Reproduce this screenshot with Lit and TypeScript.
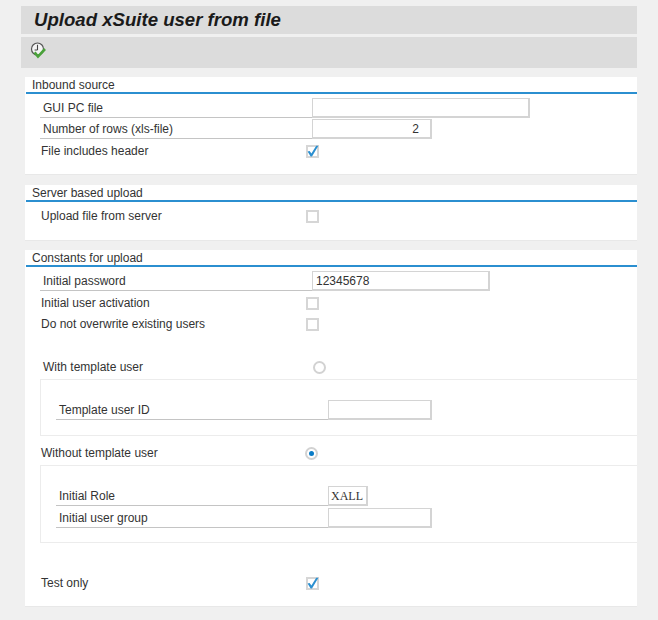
import { LitElement, html, css } from 'lit';
import { customElement } from 'lit/decorators.js';

const checkMark = html`<svg viewBox="0 0 13 14" width="13" height="14">
  <path d="M1.6 6.6 L3.6 6 L5.4 8.6 L10.2 0.8 L12.4 0.8 L6 11.6 L4.6 11.6 Z" fill="#2b8fd0" />
</svg>`;

@customElement('app-root')
export class AppRoot extends LitElement {
  static override styles = css`
    :host {
      display: block;
      width: 658px;
      height: 620px;
      overflow: hidden;
      background: #f0f0f0;
      font-family: 'Liberation Sans', sans-serif;
      font-size: 12px;
      color: #333;
      box-sizing: border-box;
      padding-top: 6px;
    }

    .title {
      margin: 0 21px;
      height: 28px;
      background: #dcdcdc;
      padding-left: 13px;
      font: italic bold 18.6px/27px 'Liberation Sans', sans-serif;
      color: #1a1a1a;
    }

    .toolbar {
      margin: 3px 21px 0;
      height: 31px;
      background: #dcdcdc;
      padding: 5px 0 0 9px;
      box-sizing: border-box;
    }

    .panel {
      margin: 9px 21px 0 25px;
      background: #fff;
      border-bottom: 1px solid #e8e8e8;
      box-sizing: border-box;
    }

    .panel-inbound { height: 98px; }
    .panel-server { margin-top: 10px; height: 56px; }
    .panel-constants { height: 357px; }

    .panel-head {
      height: 15px;
      line-height: 17px;
      padding-left: 6px;
      margin-left: 1px;
      border-bottom: 2px solid #2b8fd0;
      box-sizing: content-box;
    }

    .row {
      display: flex;
      align-items: center;
      height: 20px;
      margin-left: 15px;
    }

    .row-plain {
      height: 19px;
    }

    .label {
      width: 272px;
      flex: none;
      height: 20px;
      line-height: 19px;
      box-sizing: border-box;
      padding-left: 1px;
    }

    .label-field {
      padding-left: 3px;
      line-height: 21px;
      border-bottom: 1px solid #c4c4c4;
    }

    .label-short { width: 265px; }
    .label-indent { padding-left: 3px; }

    .field {
      flex: none;
      height: 20px;
      box-sizing: border-box;
      background: #fff;
      border: 1px solid #d4d4d4;
      border-width: 1px 2px 2px 1px;
      padding: 0 3px;
      line-height: 19px;
      white-space: pre;
    }

    .w217 { width: 218px; }
    .w178 { width: 178px; }
    .w120 { width: 120px; }
    .w104 { width: 104px; }
    .w40 { width: 40px; }
    .num { text-align: right; padding-right: 11px; }
    .mono {
      font-family: 'Liberation Serif', serif;
      padding: 0 2px;
    }

    .check {
      flex: none;
      width: 13px;
      height: 13px;
      margin-left: -6px;
      box-sizing: border-box;
      border: 2px solid #d6d6d6;
      background: #fff;
      position: relative;
    }

    .check svg {
      position: absolute;
      left: -2px;
      top: -2px;
    }

    .radio {
      flex: none;
      width: 13px;
      height: 13px;
      box-sizing: border-box;
      border: 2px solid #d2d2d2;
      border-radius: 50%;
      background: #fff;
      display: flex;
      align-items: center;
      justify-content: center;
    }

    .radio-offset { margin-left: 1px; }

    .radio.on::after {
      content: '';
      width: 5px;
      height: 5px;
      border-radius: 50%;
      background: #0a7cc7;
    }

    .box {
      margin: 2px 0 0 15px;
      border: 1px solid #ececec;
      border-right: none;
      box-sizing: border-box;
      background: #fff;
      padding-top: 20px;
    }

    .box-template { height: 57px; }
    .box-without { height: 78px; }

    .gap1 { margin-top: 1px; }
    .gap2 { margin-top: 2px; }
    .gap3 { margin-top: 3px; }
    .top4 { margin-top: 4px; }
    .top5 { margin-top: 5px; }
    .top8 { margin-top: 8px; }
    .top24 { margin-top: 24px; }
    .top31 { margin-top: 31px; }
  `;

  private _checkRow(label: string, on: boolean, cls: string) {
    return html`<div class="row row-plain ${cls}">
      <div class="label">${label}</div>
      <div class="check">${on ? checkMark : ''}</div>
    </div>`;
  }

  private _fieldRow(label: string, fieldCls: string, value = '', cls = '') {
    return html`<div class="row ${cls}">
      <div class="label label-field">${label}</div>
      <div class="field ${fieldCls}">${value}</div>
    </div>`;
  }

  override render() {
    return html`
      <div class="title">Upload xSuite user from file</div>
      <div class="toolbar">
        <svg width="20" height="20" viewBox="0 0 20 20">
          <circle cx="7.5" cy="7" r="6" fill="#f4f4f4" stroke="#555" stroke-width="1.2" />
          <path d="M7.5 2.8 V8 M7.5 8 H4.6" stroke="#444" stroke-width="1.1" fill="none" />
          <path d="M4.6 10.4 L8 14.6 L15 7" stroke="#4aa23a" stroke-width="2.6" fill="none" />
        </svg>
      </div>

      <div class="panel panel-inbound">
        <div class="panel-head">Inbound source</div>
        ${this._fieldRow('GUI PC file', 'w217', '', 'top4')}
        ${this._fieldRow('Number of rows (xls-file)', 'w120 num', '2', 'gap1')}
        ${this._checkRow('File includes header', true, 'gap3')}
      </div>

      <div class="panel panel-server">
        <div class="panel-head">Server based upload</div>
        ${this._checkRow('Upload file from server', false, 'top5')}
      </div>

      <div class="panel panel-constants">
        <div class="panel-head">Constants for upload</div>
        ${this._fieldRow('Initial password', 'w178', '12345678', 'top4')}
        ${this._checkRow('Initial user activation', false, 'gap3')}
        ${this._checkRow('Do not overwrite existing users', false, 'gap2')}
        <div class="row row-plain top24">
          <div class="label label-indent">With template user</div>
          <div class="radio radio-offset"></div>
        </div>
        <div class="box box-template">
          ${this._fieldRow('Template user ID', 'w104')}
        </div>
        <div class="row row-plain top8">
          <div class="label label-short">Without template user</div>
          <div class="radio on"></div>
        </div>
        <div class="box box-without">
          ${this._fieldRow('Initial Role', 'w40 mono', 'XALL')}
          ${this._fieldRow('Initial user group', 'w104', '', 'gap2')}
        </div>
        ${this._checkRow('Test only', true, 'top31')}
      </div>
    `;
  }
}
